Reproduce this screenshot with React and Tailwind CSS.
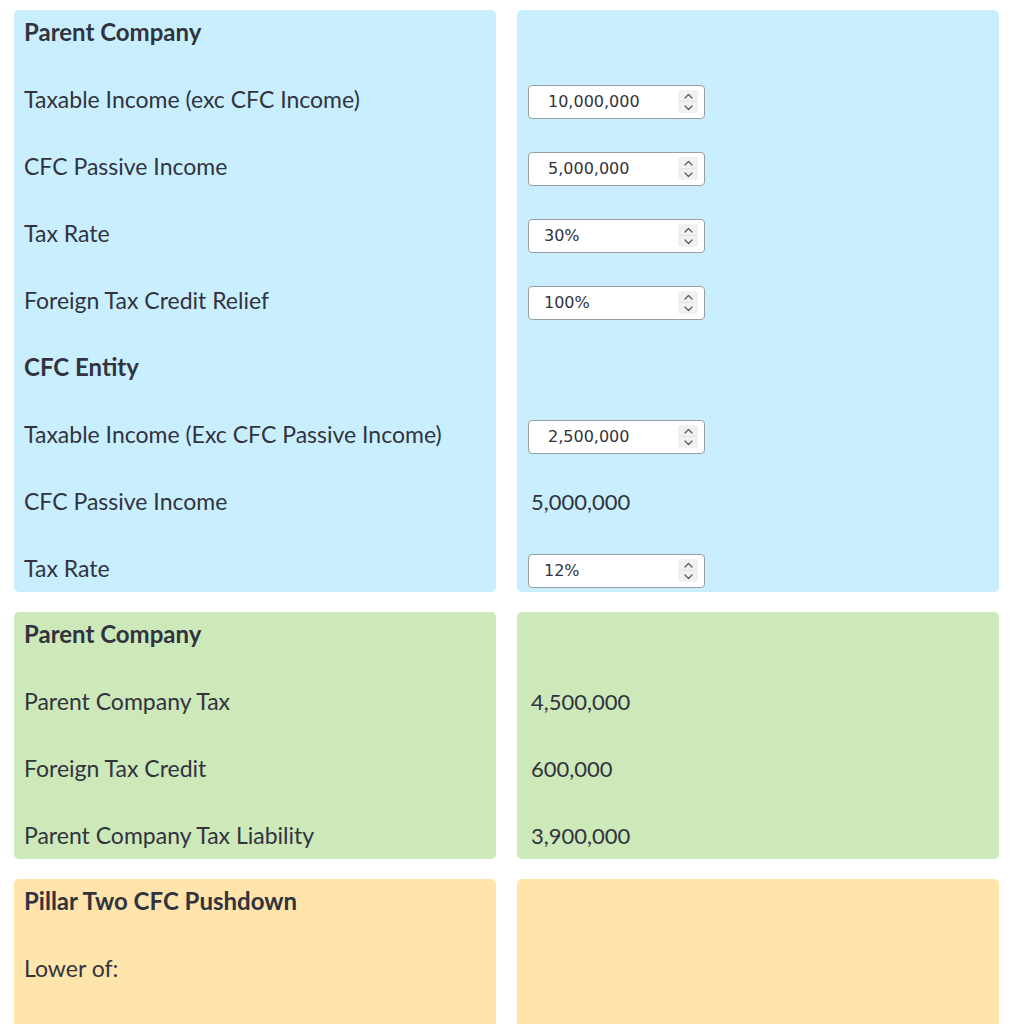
import { useState } from "react"

const Spinner = () => (
    <div className="flex flex-col w-[20px] h-[23px] rounded-[3px] bg-[#f0f1f3] overflow-hidden">
        <div className="flex-1 flex items-center justify-center border-b border-[#e4e5e8]">
            <svg width="9" height="6" viewBox="0 0 9 6" fill="none"><path d="M1 5L4.5 1.5L8 5" stroke="#555a66" strokeWidth="1.3" strokeLinecap="round" strokeLinejoin="round" /></svg>
        </div>
        <div className="flex-1 flex items-center justify-center">
            <svg width="9" height="6" viewBox="0 0 9 6" fill="none"><path d="M1 1L4.5 4.5L8 1" stroke="#555a66" strokeWidth="1.3" strokeLinecap="round" strokeLinejoin="round" /></svg>
        </div>
    </div>
)

const NumberBox = ({ value, wide }) => (
    <div className={`flex items-center w-[177px] h-[34px] mt-[5px] bg-white border border-[#9a9ca3] rounded-[4px] pr-[6px] ${wide ? 'pl-[19px]' : 'pl-[15px]'}`}>
        <span className="flex-1 text-[16px] text-[#31333f] font-['DejaVu_Sans',sans-serif]">{value}</span>
        <Spinner />
    </div>
)

const Row = ({ children, bold }) => (
    <div className={`h-[46px] pb-[2px] flex items-center ${bold ? 'font-bold text-[24px]' : ''}`}>{children}</div>
)

const Panel = ({ color, left, right }) => (
    <div className="grid grid-cols-2 gap-[21px]">
        <div className={`${color} rounded-[5px] pl-[10px] flex flex-col gap-[21px]`}>
            {left.map((l, i) => <Row key={i} bold={l.bold}>{l.text}</Row>)}
        </div>
        <div className={`${color} rounded-[5px] pl-[11px] flex flex-col gap-[21px]`}>
            {right.map((r, i) => (
                <Row key={i}>
                    {r?.input ? <NumberBox value={r.input} wide={r.wide} /> : <span className="pl-[3px] text-[22px]">{r?.text}</span>}
                </Row>
            ))}
        </div>
    </div>
)

export default function App() {
    const [data] = useState({
        parentIncome: '10,000,000',
        cfcPassive: '5,000,000',
        parentRate: '30%',
        ftcRelief: '100%',
        cfcIncome: '2,500,000',
        cfcRate: '12%',
    })

    return (
        <div className="bg-white text-[#31333f] text-[23px] font-['Lato',sans-serif] pl-[14px] pt-[10px] pr-[20px] flex flex-col gap-[20px] h-[1024px] overflow-hidden">
            <Panel
                color="bg-[#c9effe]"
                left={[
                    { text: 'Parent Company', bold: true },
                    { text: 'Taxable Income (exc CFC Income)' },
                    { text: 'CFC Passive Income' },
                    { text: 'Tax Rate' },
                    { text: 'Foreign Tax Credit Relief' },
                    { text: 'CFC Entity', bold: true },
                    { text: 'Taxable Income (Exc CFC Passive Income)' },
                    { text: 'CFC Passive Income' },
                    { text: 'Tax Rate' },
                ]}
                right={[
                    null,
                    { input: data.parentIncome, wide: true },
                    { input: data.cfcPassive, wide: true },
                    { input: data.parentRate },
                    { input: data.ftcRelief },
                    null,
                    { input: data.cfcIncome, wide: true },
                    { text: '5,000,000' },
                    { input: data.cfcRate },
                ]}
            />
            <Panel
                color="bg-[#cde8b9]"
                left={[
                    { text: 'Parent Company', bold: true },
                    { text: 'Parent Company Tax' },
                    { text: 'Foreign Tax Credit' },
                    { text: 'Parent Company Tax Liability' },
                ]}
                right={[
                    null,
                    { text: '4,500,000' },
                    { text: '600,000' },
                    { text: '3,900,000' },
                ]}
            />
            <Panel
                color="bg-[#ffe4ab]"
                left={[
                    { text: 'Pillar Two CFC Pushdown', bold: true },
                    { text: 'Lower of:' },
                    { text: '' },
                    { text: '' },
                ]}
                right={[null, null, null, null]}
            />
        </div>
    )
}
